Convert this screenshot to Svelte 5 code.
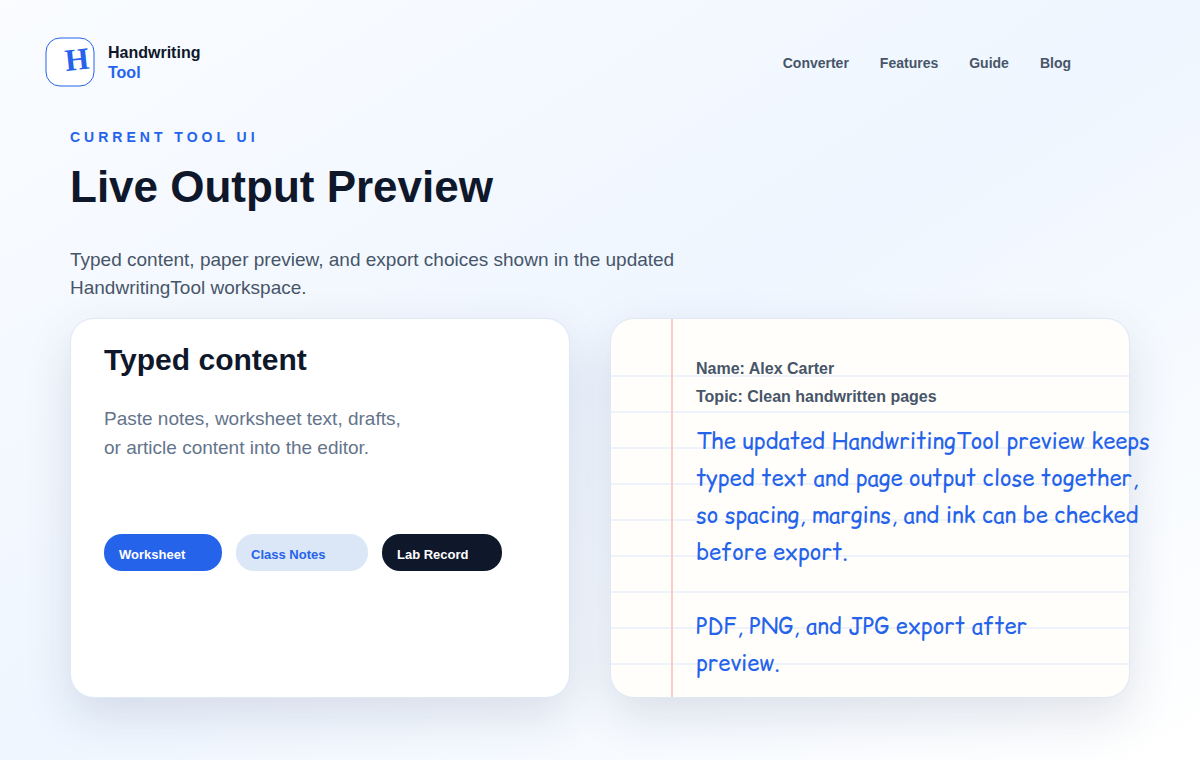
<script lang="ts">
	type Preset = { label: string; tone: 'primary' | 'soft' | 'dark' };

	const links = ['Converter', 'Features', 'Guide', 'Blog'];

	const presets: Preset[] = [
		{ label: 'Worksheet', tone: 'primary' },
		{ label: 'Class Notes', tone: 'soft' },
		{ label: 'Lab Record', tone: 'dark' }
	];

	const paragraphs = [
		[
			'The updated HandwritingTool preview keeps',
			'typed text and page output close together,',
			'so spacing, margins, and ink can be checked',
			'before export.'
		],
		['PDF, PNG, and JPG export after', 'preview.']
	];
</script>

<div class="page">
	<header class="topbar">
		<a class="brand" href="/">
			<svg class="mark" viewBox="0 0 50 50" aria-hidden="true">
				<rect x="1" y="1" width="48" height="48" rx="14" />
				<text x="21" y="34" transform="rotate(-6 21 34)">H</text>
			</svg>
			<span class="brand-name">Handwriting<span class="accent">Tool</span></span>
		</a>
		<nav class="nav" aria-label="Main">
			{#each links as link (link)}
				<a href="#{link.toLowerCase()}">{link}</a>
			{/each}
		</nav>
	</header>

	<main>
		<p class="eyebrow">CURRENT TOOL UI</p>
		<h1>Live Output Preview</h1>
		<p class="lead">
			Typed content, paper preview, and export choices shown in the updated HandwritingTool
			workspace.
		</p>

		<div class="panels">
			<section class="card editor">
				<h2>Typed content</h2>
				<p>Paste notes, worksheet text, drafts, or article content into the editor.</p>
				<div class="presets">
					{#each presets as preset (preset.label)}
						<button type="button" class="preset {preset.tone}">{preset.label}</button>
					{/each}
				</div>
			</section>

			<section class="card paper">
				<div class="paper-head">
					<div>Name: Alex Carter</div>
					<div>Topic: Clean handwritten pages</div>
				</div>
				{#each paragraphs as lines}
					<p class="ink">
						{#each lines as line}
							<span>{line}</span>
						{/each}
					</p>
				{/each}
			</section>
		</div>
	</main>
</div>

<style>
	:global(body) {
		margin: 0;
	}
	.page {
		box-sizing: border-box;
		min-height: 100vh;
		padding: 37px 70px 62px;
		background: linear-gradient(to bottom right, #fafcff 0%, #eff6ff 50%, #ffffff 100%);
		color: #0f172a;
		font-family: 'Liberation Sans', Arial, sans-serif;
	}
	h1,
	h2,
	p {
		margin: 0;
	}
	a {
		color: inherit;
		text-decoration: none;
	}

	.topbar {
		display: flex;
		align-items: center;
		justify-content: space-between;
		margin-left: -25px;
		padding-right: 59px;
	}
	.brand {
		display: flex;
		align-items: center;
		gap: 13px;
	}
	.mark {
		width: 50px;
		height: 50px;
	}
	.mark rect {
		fill: #fff;
		stroke: #2563eb;
	}
	.mark text {
		fill: #2563eb;
		font: bold 31px 'Liberation Serif', serif;
	}
	.brand-name {
		display: flex;
		flex-direction: column;
		padding-top: 2px;
		font-size: 16px;
		font-weight: 700;
		line-height: 20px;
	}
	.accent {
		color: #2563eb;
	}
	.nav {
		display: flex;
		gap: 31px;
		padding-top: 2px;
		color: #475569;
		font-size: 14px;
		font-weight: 700;
	}

	.eyebrow {
		margin-top: 42px;
		color: #2563eb;
		font-size: 14px;
		font-weight: 700;
		letter-spacing: 4px;
		line-height: 16px;
	}
	h1 {
		margin-top: 16px;
		font-size: 44px;
		line-height: 52px;
	}
	.lead {
		max-width: 640px;
		margin-top: 33px;
		color: #475569;
		font-size: 19px;
		line-height: 28px;
	}

	.panels {
		display: grid;
		grid-template-columns: 25fr 26fr;
		gap: 40px;
		margin-top: 16px;
	}
	.card {
		box-sizing: border-box;
		min-width: 0;
		min-height: 380px;
		border: 1px solid #dfe8f5;
		border-radius: 24px;
		box-shadow: 0 18px 48px rgba(20, 35, 75, 0.12);
	}

	.editor {
		padding: 23px 33px;
		background: #fff;
	}
	.editor h2 {
		font-size: 30px;
		line-height: 36px;
	}
	.editor p {
		max-width: 310px;
		margin-top: 26px;
		color: #64748b;
		font-size: 19px;
		line-height: 29px;
	}
	.presets {
		display: flex;
		gap: 14px;
		margin-top: 72px;
	}
	.preset {
		height: 37px;
		padding: 4px 15px 0;
		border: 0;
		border-radius: 18px;
		font: bold 13px 'Liberation Sans', Arial, sans-serif;
		text-align: left;
		cursor: pointer;
	}
	.primary {
		width: 118px;
		background: #2563eb;
		color: #fff;
	}
	.soft {
		width: 132px;
		background: #dbe6f6;
		color: #2563eb;
	}
	.dark {
		width: 120px;
		background: #0f172a;
		color: #fff;
	}

	/* red margin, a blank strip over the first rule, then the ruled lines */
	.paper {
		padding: 36px 0 12px 85px;
		background:
			linear-gradient(#fecaca, #fecaca) 60px 0 / 2px 100% no-repeat,
			linear-gradient(#fffefa, #fffefa) 0 0 / 100% 40px no-repeat,
			linear-gradient(#edf2fb 2px, transparent 2px) 0 20px / 100% 36px,
			#fffefa;
	}
	.paper-head {
		color: #475569;
		font-size: 16px;
		font-weight: 700;
		line-height: 28px;
	}
	.ink {
		margin-top: 12px;
		color: #2563eb;
		font-family: 'Comic Relief', 'Comic Neue', cursive;
		font-size: 22px;
		line-height: 37px;
		white-space: nowrap;
	}
	.ink + .ink {
		margin-top: 37px;
	}
	.ink span {
		display: block;
	}
</style>
